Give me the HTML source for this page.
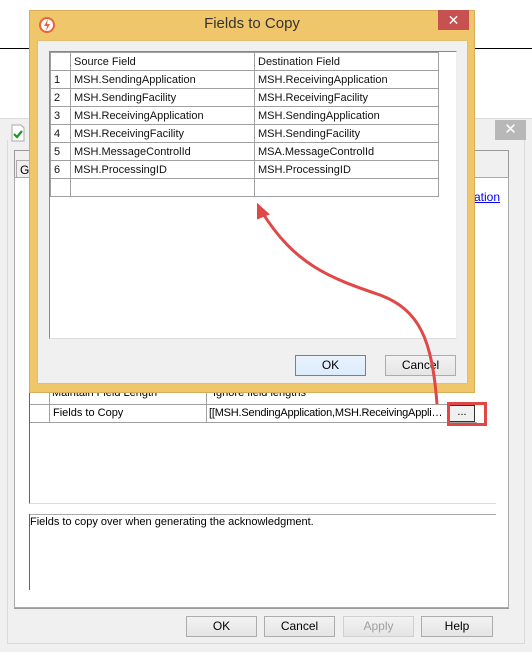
<!DOCTYPE html>
<html><head><style>
*{box-sizing:border-box;margin:0;padding:0}
body{width:532px;height:652px;position:relative;overflow:hidden;background:#fff;font-family:"Liberation Sans",Tahoma,sans-serif;font-size:11px;color:#000}
.a{position:absolute}
.btn{position:absolute;height:21px;border:1px solid #acacac;background:linear-gradient(#f2f2f2,#e5e5e5);text-align:center;line-height:19px;font-size:12px}
table{border-collapse:collapse;table-layout:fixed}
td{border:1px solid #a0a0a0;height:18px;padding:0 3px;font-size:11px;color:#111;vertical-align:middle;white-space:nowrap;overflow:hidden}
</style></head><body>
<div class="a" style="left:0;top:48px;width:532px;height:1px;background:#000"></div>
<div class="a" style="left:0;top:118px;width:532px;height:534px;background:#f0f0f0;border-top:1px solid #ddd"></div>
<div class="a" style="left:7px;top:140px;width:518px;height:504px;border:1px solid #dadada;border-top:none"></div>
<svg class="a" style="left:10px;top:124px" width="16" height="18"><path d="M2 1h9l3 3v13H2z" fill="#fff" stroke="#aaa"/><path d="M4 10l3 3 5-6" stroke="#1a9a1a" stroke-width="2.2" fill="none"/></svg>
<div class="a" style="left:495px;top:120px;width:31px;height:20px;background:#b8b8b8;color:#fff;text-align:center;line-height:20px;font-size:15px">✕</div>
<div class="a" style="left:14px;top:150px;width:495px;height:459px;border:1px solid #9a9a9a;background:#f0f0f0"></div>
<div class="a" style="left:16px;top:160px;width:14px;height:18px;border:1px solid #aaa;border-bottom:none;background:#f0f0f0;font-size:12px;padding:2px 0 0 3px">G</div>
<div class="a" style="left:14px;top:177px;width:495px;height:431px;background:#fff;border:1px solid #aaa"></div>
<div class="a" style="left:474px;top:190px;font-size:12px;color:#0000ee;text-decoration:underline">ation</div>
<div class="a" style="left:29px;top:380px;width:467px;height:124px;border-left:1px solid #666;border-bottom:1px solid #ddd;background:#fff"></div>
<div class="a" style="left:30px;top:387px;width:445px;height:18px;border-bottom:1px solid #a0a0a0;font-size:11px;padding-left:22px;overflow:hidden;line-height:12px">Maintain Field Length<span style="position:absolute;left:183px">Ignore field lengths</span></div>
<div class="a" style="left:30px;top:404px;width:447px;height:19px;border-top:1px solid #a0a0a0;border-bottom:1px solid #a0a0a0"></div>
<div class="a" style="left:49px;top:387px;width:1px;height:36px;background:#a0a0a0"></div>
<div class="a" style="left:206px;top:387px;width:1px;height:36px;background:#a0a0a0"></div>
<div class="a" style="left:53px;top:407px;font-size:11px">Fields to Copy</div>
<div class="a" style="left:209px;top:407px;font-size:11px;width:238px;overflow:hidden;white-space:nowrap;text-overflow:ellipsis;letter-spacing:-0.2px">[[MSH.SendingApplication,MSH.ReceivingApplication]]</div>
<div class="a" style="left:449px;top:405px;width:26px;height:17px;border:1px solid #333;background:#f0f0f0;text-align:center;line-height:12px;font-size:11px">...</div>
<div class="a" style="left:447px;top:402px;width:40px;height:24px;border:3px solid #e04848"></div>
<div class="a" style="left:29px;top:514px;width:467px;height:1px;background:#aaa"></div>
<div class="a" style="left:29px;top:514px;width:1px;height:76px;background:#666"></div>
<div class="a" style="left:30px;top:516px;font-size:11px">Fields to copy over when generating the acknowledgment.</div>
<div class="btn" style="left:186px;top:616px;width:71px">OK</div>
<div class="btn" style="left:264px;top:616px;width:71px">Cancel</div>
<div class="btn" style="left:343px;top:616px;width:71px;color:#a0a0a0;border-color:#d0d0d0">Apply</div>
<div class="btn" style="left:421px;top:616px;width:72px">Help</div>
<!-- dialog -->
<div class="a" style="left:29px;top:10px;width:446px;height:383px;background:#f0c66a;border:1px solid #d8ae58"></div>
<svg class="a" style="left:38px;top:16px" width="18" height="18"><circle cx="9" cy="9" r="7" fill="#fff" stroke="#e8643c" stroke-width="2"/><path d="M10 3L6 10h3l-1 5 4-7H9z" fill="#e8643c"/></svg>
<div class="a" style="left:29px;top:15px;width:446px;text-align:center;font-size:15px;color:#333">Fields to Copy</div>
<div class="a" style="left:438px;top:10px;width:31px;height:20px;background:#c75050;color:#fff;text-align:center;line-height:20px;font-size:14px">✕</div>
<div class="a" style="left:37px;top:40px;width:431px;height:344px;background:#f0f0f0;border:1px solid #e0c070"></div>
<div class="a" style="left:49px;top:51px;width:408px;height:288px;background:#fff;border:1px solid #888;border-right-color:#eee;border-bottom-color:#ddd"></div>
<table class="a" style="left:50px;top:52px;width:388px">
<col style="width:20px"><col style="width:184px"><col style="width:184px">
<tr><td></td><td>Source Field</td><td>Destination Field</td></tr>
<tr><td>1</td><td>MSH.SendingApplication</td><td>MSH.ReceivingApplication</td></tr>
<tr><td>2</td><td>MSH.SendingFacility</td><td>MSH.ReceivingFacility</td></tr>
<tr><td>3</td><td>MSH.ReceivingApplication</td><td>MSH.SendingApplication</td></tr>
<tr><td>4</td><td>MSH.ReceivingFacility</td><td>MSH.SendingFacility</td></tr>
<tr><td>5</td><td>MSH.MessageControlId</td><td>MSA.MessageControlId</td></tr>
<tr><td>6</td><td>MSH.ProcessingID</td><td>MSH.ProcessingID</td></tr>
<tr><td></td><td></td><td></td></tr>
</table>
<div class="btn" style="left:295px;top:355px;width:71px;border-color:#3c8fdc;background:linear-gradient(#e8f2fc,#dcecfc)">OK</div>
<div class="btn" style="left:385px;top:355px;width:71px">Cancel</div>
<svg class="a" style="left:0;top:0" width="532" height="652"><path d="M437 404 C432 340 420 310 380 295 C330 278 295 265 262 212" stroke="#e04848" stroke-width="3" fill="none"/><path d="M258 205 L268 214 L258 218z" fill="#e04848" stroke="#e04848" stroke-width="2"/></svg>
</body></html>
